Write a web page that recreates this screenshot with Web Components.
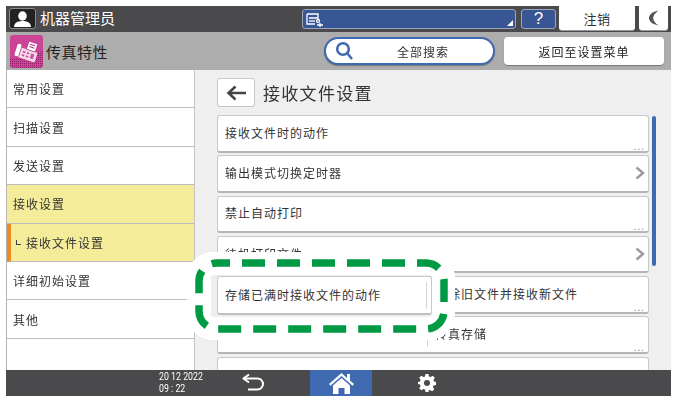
<!DOCTYPE html>
<html lang="zh">
<head>
<meta charset="utf-8">
<style>
  html, body { margin: 0; padding: 0; background: #fff; }
  body { font-family: "Noto Sans CJK SC", "Noto Sans", sans-serif; color: #333; }
</style>
</head>
<body>
<op-screen>
  <op-topbar slot="top" user="机器管理员" logout="注销"></op-topbar>
  <op-subbar slot="sub" title="传真特性" search="全部搜索" back="返回至设置菜单"></op-subbar>
  <op-menu slot="menu">
    <op-menu-item>常用设置</op-menu-item>
    <op-menu-item>扫描设置</op-menu-item>
    <op-menu-item>发送设置</op-menu-item>
    <op-menu-item active>接收设置</op-menu-item>
    <op-menu-item active current>接收文件设置</op-menu-item>
    <op-menu-item>详细初始设置</op-menu-item>
    <op-menu-item>其他</op-menu-item>
  </op-menu>
  <op-panel slot="panel" title="接收文件设置">
    <op-row mark="dots">接收文件时的动作</op-row>
    <op-row mark="chevron">输出模式切换定时器</op-row>
    <op-row mark="dots">禁止自动打印</op-row>
    <op-row mark="chevron">待机打印文件</op-row>
    <op-row mark="dots" value="删除旧文件并接收新文件"></op-row>
    <op-row mark="dots" value="传真存储">接收文件的存储位置</op-row>
    <op-row></op-row>
  </op-panel>
  <op-bottombar slot="bottom" date="20 12 2022" time="09 : 22"></op-bottombar>
  <op-callout slot="callout">存储已满时接收文件的动作</op-callout>
</op-screen>

<script>
class OpScreen extends HTMLElement {
  constructor() {
    super();
    this.attachShadow({mode: 'open'}).innerHTML = `
      <style>
        :host { display: grid; position: relative; width: 665px; height: 390px; margin: 6px 0 0 6px; filter: blur(.3px);
          grid-template-columns: 189px 1fr; grid-template-rows: 26px 38px 300px 26px; }
        ::slotted([slot=top]), ::slotted([slot=sub]), ::slotted([slot=bottom]) { grid-column: 1 / 3; }
      </style>
      <slot name="top"></slot>
      <slot name="sub"></slot>
      <slot name="menu"></slot>
      <slot name="panel"></slot>
      <slot name="bottom"></slot>
      <slot name="callout"></slot>
    `
  }
}

class OpTopbar extends HTMLElement {
  constructor() {
    super();
    this.attachShadow({mode: 'open'}).innerHTML = `
      <style>
        :host { display: flex; align-items: stretch; background: #4a4a4c; color: #fff; height: 26px; box-sizing: border-box; padding-bottom: 2px; }
        .user { width: 27px; height: 21px; margin: 2px 0 0 3px; box-sizing: border-box; background: #222; border: 1px solid #8a8a8a; border-radius: 3px;
          display: flex; align-items: center; justify-content: center; }
        .name { font-size: 15px; line-height: 24px; margin-left: 4px; width: 262px; }
        .status { width: 214px; height: 20px; margin-top: 3px; box-sizing: border-box; background: #375693; border: 1px solid #9aa6bd; border-radius: 3px; position: relative; }
        .status svg { position: absolute; left: 2px; top: 1px; }
        .status i { position: absolute; right: 2px; bottom: 2px; border: 3px solid transparent; border-right-color: #fff; border-bottom-color: #fff; }
        .help { width: 35px; height: 20px; margin: 3px 0 0 5px; box-sizing: border-box; background: #375693; border: 1px solid #9aa6bd; border-radius: 3px;
          font: 17px/18px "Liberation Sans", sans-serif; text-align: center; }
        .tab { background: #fff; color: #333; border-radius: 0 0 3px 3px; box-shadow: 0 1px 0 #999; display: flex; align-items: center; justify-content: center; height: 24px; }
        .logout { width: 76px; margin-left: 3px; font-size: 13px; letter-spacing: .5px; }
        .moon { width: 29px; margin-left: 4px; }
      </style>
      <div class="user">
        <svg width="19" height="16" viewBox="0 0 19 16"><ellipse cx="9.500" cy="5" rx="4.300" ry="4.700" fill="#fff"/><path d="M1 16c0-4 3.500-6 8.500-6S18 12 18 16z" fill="#fff"/></svg>
      </div>
      <div class="name">${this.getAttribute('user')}</div>
      <div class="status">
        <svg width="20" height="17" viewBox="0 0 20 17" fill="none" stroke="#fff" stroke-width="1.300">
          <path d="M2 3h11v4H4"/><path d="M2 3v10h8"/><path d="M4 10h6"/><circle cx="13" cy="10" r="1.500"/><path d="M12 14h6M15 12v4"/>
        </svg>
        <i></i>
      </div>
      <div class="help">?</div>
      <div class="tab logout">${this.getAttribute('logout')}</div>
      <div class="tab moon">
        <svg width="12" height="16" viewBox="0 0 12 16"><path d="M10.500 0.500C3 2 1 5.500 1 8s2 6 9.500 7.500C7 13 5.200 10.500 5.200 8S7 3 10.500 0.500z" fill="#555"/></svg>
      </div>
    `
  }
}

class OpSubbar extends HTMLElement {
  constructor() {
    super();
    this.attachShadow({mode: 'open'}).innerHTML = `
      <style>
        :host { display: flex; align-items: center; background: #adadad; height: 38px; color: #222; }
        svg.fax { margin: 0 0 0 4px; flex: none; }
        .title { font-size: 15px; letter-spacing: .5px; margin-left: 3px; width: 278px; }
        .search { width: 171px; height: 28px; box-sizing: border-box; background: #fff; border: 2px solid #3f69b0; border-radius: 14px;
          display: flex; align-items: center; font-size: 12px; letter-spacing: 1px; color: #333; box-shadow: 0 1px 1px #777; }
        .search svg { margin-left: 9px; flex: none; }
        .search span { margin-left: 44px; }
        .back { width: 160px; height: 28px; margin-left: 9px; background: #fff; border-radius: 4px; box-shadow: 0 1px 1px #777;
          display: flex; align-items: center; justify-content: center; font-size: 12px; letter-spacing: 1px; }
      </style>
      <svg class="fax" width="33" height="33" viewBox="0 0 33 33">
        <defs>
          <pattern id="dots" width="2" height="2" patternUnits="userSpaceOnUse"><rect width="1" height="1" fill="#8f1f68"/></pattern>
        </defs>
        <rect width="33" height="33" rx="3" fill="#cb4496"/>
        <path d="M0 24L33 16V30a3 3 0 0 1-3 3H3a3 3 0 0 1-3-3z" fill="url(#dots)"/>
        <g transform="translate(2.500 1.500) scale(.85) rotate(18 16 19)">
          <rect x="5" y="15" width="24" height="12" rx="2" fill="#f9d8ea"/>
          <rect x="3" y="11" width="6" height="16" rx="2.500" fill="#fff" stroke="#b22c80" stroke-width=".8"/>
          <path d="M15 15V5h11v10z" fill="#fff" stroke="#b22c80" stroke-width=".8"/>
          <path d="M17.500 8h6M17.500 11h6" stroke="#b22c80" stroke-width="1.200"/>
          <path d="M12 18h3v2h-3zM12 22h3v2h-3zM17 18h3v2h-3zM17 22h3v2h-3zM22 18h4v6h-4z" fill="#c65a9f"/>
        </g>
      </svg>
      <div class="title">${this.getAttribute('title')}</div>
      <div class="search">
        <svg width="18" height="20" viewBox="0 0 18 20" fill="none" stroke="#3f69b0" stroke-width="2.500"><circle cx="8" cy="8" r="5.800"/><path d="M12 12l5 6"/></svg>
        <span>${this.getAttribute('search')}</span>
      </div>
      <div class="back">${this.getAttribute('back')}</div>
    `
  }
}

class OpMenu extends HTMLElement {
  constructor() {
    super();
    this.attachShadow({mode: 'open'}).innerHTML = `
      <style>
        :host { display: flex; flex-direction: column; background: #fff; border-left: 1px solid #b5b5b5; border-right: 1px solid #c4c4c4; box-sizing: border-box; }
      </style>
      <slot></slot>
    `
  }
}

class OpMenuItem extends HTMLElement {
  constructor() {
    super();
    const sub = this.hasAttribute('current') ? '<i></i>' : '';
    this.attachShadow({mode: 'open'}).innerHTML = `
      <style>
        :host { display: flex; align-items: center; height: 38.400px; box-sizing: border-box; padding-left: 6px; border-bottom: 1px solid #bdbdbd;
          font-size: 12px; letter-spacing: 1px; color: #333; }
        :host([active]) { background: #f5ec9a; }
        :host([current]) { border-left: 4px solid #ee8a1e; padding-left: 5px; }
        i { width: 4px; height: 4px; margin: 1px 5px 0 0; border-left: 1.500px solid #444; border-bottom: 1.500px solid #444; }
      </style>
      ${sub}<slot></slot>
    `
  }
}

class OpPanel extends HTMLElement {
  constructor() {
    super();
    this.attachShadow({mode: 'open'}).innerHTML = `
      <style>
        :host { display: block; position: relative; overflow: hidden; background: #efefef; }
        header { display: flex; align-items: center; height: 45px; padding-left: 22px; }
        button { width: 38px; height: 29px; margin: 0; padding: 0; background: #fff; border: 1px solid #c8c8c8; border-radius: 3px; display: flex; align-items: center; justify-content: center; }
        h1 { font-size: 17px; font-weight: 400; letter-spacing: 1.300px; margin: 0 0 0 8px; color: #333; line-height: 29px; }
        .list { display: flex; flex-direction: column; gap: 2.800px; margin-left: 22px; width: 432px; }
        .bar { position: absolute; left: 457px; top: 46px; width: 4px; height: 150px; background: #3f69b0; border-radius: 2px; }
      </style>
      <header>
        <button><svg width="21" height="16" viewBox="0 0 21 16" fill="none" stroke="#444" stroke-width="2.500"><path d="M20 8H2.500M9.500 1.500L2.500 8l7 6.500"/></svg></button>
        <h1>${this.getAttribute('title')}</h1>
      </header>
      <div class="list"><slot></slot></div>
      <div class="bar"></div>
    `
  }
}

class OpRow extends HTMLElement {
  constructor() {
    super();
    const mark = this.getAttribute('mark');
    const value = this.getAttribute('value');
    this.attachShadow({mode: 'open'}).innerHTML = `
      <style>
        :host { display: flex; align-items: center; position: relative; flex: none; height: 37.500px; box-sizing: border-box; background: #fff;
          border: 1px solid #c9c9c9; border-bottom: 2px solid #b5b5b5; border-radius: 3px;
          padding-left: 7px; font-size: 12px; letter-spacing: 1px; color: #333; padding-bottom: 2px; }
        .label { width: 202px; white-space: nowrap; }
        .value { border-left: 1px solid #d5d5d5; padding-left: 7px; white-space: nowrap; line-height: 27px; }
        .dots { position: absolute; right: 3px; bottom: 0; font: 10px/9px "Liberation Sans", sans-serif; color: #888; letter-spacing: 1px; }
        svg { position: absolute; right: 3px; top: 10px; }
      </style>
      <div class="label"><slot></slot></div>
      ${value ? `<div class="value">${value}</div>` : ''}
      ${mark == 'dots' ? '<span class="dots">...</span>' : ''}
      ${mark == 'chevron' ? '<svg width="10" height="14" viewBox="0 0 10 14" fill="none" stroke="#9b9b9b" stroke-width="2.400"><path d="M1.500 1.500L8 7l-6.500 5.500"/></svg>' : ''}
    `
  }
}

class OpBottombar extends HTMLElement {
  constructor() {
    super();
    this.attachShadow({mode: 'open'}).innerHTML = `
      <style>
        :host { display: flex; align-items: center; background: #4a4a4c; color: #fff; height: 26px; }
        .clock { width: 43px; margin-left: 153px; font: 11px/12.500px Roboto, sans-serif; white-space: nowrap; transform: scaleX(.8); transform-origin: left center; }
        .back { margin-left: 40px; width: 24px; display: flex; }
        .home { margin-left: 44px; width: 62px; height: 26px; background: #3f69b0; display: flex; align-items: center; justify-content: center; }
        .gear { margin-left: 46px; display: flex; }
      </style>
      <div class="clock">${this.getAttribute('date')}<br>${this.getAttribute('time')}</div>
      <div class="back">
        <svg width="22" height="18" viewBox="0 0 22 18" fill="none" stroke="#fff" stroke-width="2"><path d="M1 4.500h14.500a5 5 0 0 1 0 11H6"/><path d="M7 0.500L1.500 4.500 7 8.500" stroke-linejoin="round"/></svg>
      </div>
      <div class="home">
        <svg width="25" height="23" viewBox="0 0 25 23"><path d="M12.500 1L0 12l1.500 1.800L12.500 4l11 9.800L25 12l-4-3.500V2h-3v4z" fill="#fff"/><path d="M4 13.500L12.500 6 21 13.500V22h-5.500v-6h-6v6H4z" fill="#fff"/><rect x="10.500" y="17" width="4" height="5" fill="#3f69b0"/></svg>
      </div>
      <div class="gear">
        <svg width="18" height="18" viewBox="0 0 18 18"><path d="M7.500 0h3l.5 2.500 1.500.6L14.700 1.700l2.100 2.100-1.400 2.200.6 1.500L18 8v3l-2.500.5-.6 1.500 1.400 2.200-2.100 2.100-2.200-1.400-1.500.6L10.500 18h-3L7 15.500l-1.500-.6-2.200 1.400-2.100-2.100L2.600 12 2 10.500 0 10V8l2-.5.6-1.500L1.200 3.800l2.100-2.100 2.200 1.400L7 2.500z" fill="#fff"/><circle cx="9" cy="9" r="3" fill="#4a4a4c"/></svg>
      </div>
    `
  }
}

class OpCallout extends HTMLElement {
  constructor() {
    super();
    this.attachShadow({mode: 'open'}).innerHTML = `
      <style>
        :host { position: absolute; left: 181px; top: 246px; width: 268px; height: 88px; background: #fff; border-radius: 26px; display: block; }
        .tray { position: absolute; left: 24px; top: 23px; width: 221px; height: 42px; background: #eee; border-radius: 3px; }
        .row { position: absolute; left: 6px; top: 1px; width: 215px; height: 39px; box-sizing: border-box; background: #fff; border: 1px solid #c9c9c9; border-bottom: 2px solid #c0c0c0; border-radius: 3px;
          display: flex; align-items: center; padding-left: 7px; padding-bottom: 2px; font-size: 12px; letter-spacing: 1px; color: #333; }
        .row i { position: absolute; left: 208px; top: 5px; height: 27px; border-left: 1px solid #d5d5d5; }
        svg { position: absolute; left: 0; top: 0; }
      </style>
      <div class="tray"><div class="row"><slot></slot><i></i></div></div>
      <svg width="268" height="88" viewBox="0 0 268 88" fill="none">
        <rect x="12" y="11" width="245" height="66" rx="18" stroke="#009a44" stroke-width="7.500" stroke-dasharray="23 12" stroke-dashoffset="10"/>
      </svg>
    `
  }
}

customElements.define('op-screen', OpScreen);
customElements.define('op-topbar', OpTopbar);
customElements.define('op-subbar', OpSubbar);
customElements.define('op-menu', OpMenu);
customElements.define('op-menu-item', OpMenuItem);
customElements.define('op-panel', OpPanel);
customElements.define('op-row', OpRow);
customElements.define('op-bottombar', OpBottombar);
customElements.define('op-callout', OpCallout);
</script>
</body>
</html>
